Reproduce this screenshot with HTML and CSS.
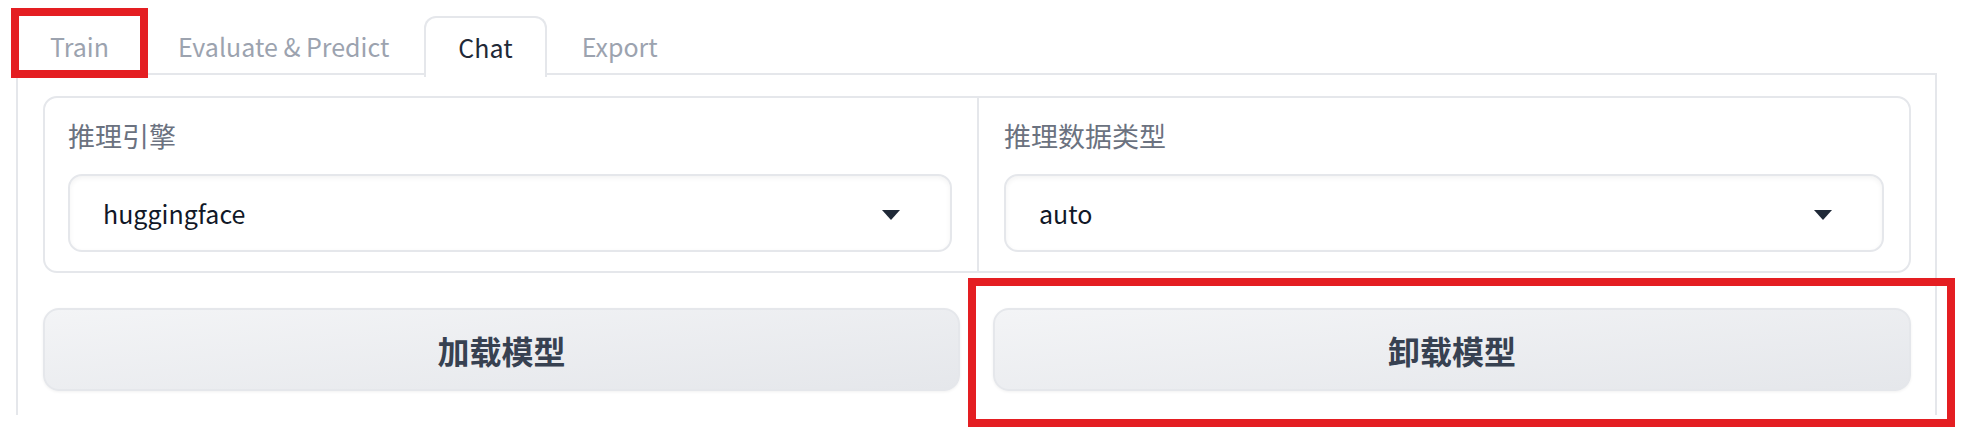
FILE: index.html
```html
<!doctype html>
<html>
<head>
<meta charset="utf-8">
<title>Chat</title>
<link rel="stylesheet" href="styles.css">
</head>

<body>
<div class="page">
  <div class="tabs">
    <div class="tab-nav">
      <button class="tab">Train</button>
      <button class="tab">Evaluate &amp; Predict</button>
      <button class="tab selected">Chat</button>
      <button class="tab">Export</button>
    </div>
    <div class="tab-body">
      <div class="form">
        <div class="field">
          <div class="label">推理引擎</div>
          <div class="dropdown">
            <span>huggingface</span>
            <svg width="18" height="10" viewBox="0 0 18 10"><path d="M0 0H18L9 10Z" fill="#1f2937"/></svg>
          </div>
        </div>
        <div class="field">
          <div class="label">推理数据类型</div>
          <div class="dropdown">
            <span>auto</span>
            <svg width="18" height="10" viewBox="0 0 18 10"><path d="M0 0H18L9 10Z" fill="#1f2937"/></svg>
          </div>
        </div>
      </div>
      <div class="actions">
        <button class="btn">加载模型</button>
        <button class="btn">卸载模型</button>
      </div>
    </div>
  </div>

  <div class="mark mark-tab"></div>
  <div class="mark mark-btn"></div>
</div>
</body>
</html>
```

FILE: styles.css
```css
*{ margin:0; padding:0; box-sizing:border-box}
body{ background:#fff; font-family:"Noto Sans CJK SC", "Noto Sans", sans-serif; color:#1f2937}
.page{ position:relative; height:429px; padding:16px 0 0 16px; overflow:hidden}

.tabs{ width:1921px}
.tab-nav{ display:flex; gap:1px; border-bottom:2px solid #e5e7eb; height:59px}
.tab{ height:59px; padding:0 32px; border:2px solid transparent; border-bottom:none; border-radius:12px 12px 0 0; background:none; font-family:inherit; font-size:25px; line-height:47px; color:#9ca3af; margin-bottom:-2px}
.tab.selected{ border-color:#e5e7eb; background:#fff; color:#1f2937; height:61px}

.tab-body{ border:2px solid #e5e7eb; border-top:none; border-bottom:none; height:340px; padding:21px 24px 24px 25px}

.form{ display:grid; grid-template-columns:1fr 1fr; border:2px solid #e5e7eb; border-radius:14px; background:#fff}
.field{ padding:20px 25px 19px 23px}
.field+.field{ border-left:2px solid #e5e7eb; padding-left:25px}
.label{ font-size:27px; line-height:36px; color:#6b7280; margin-bottom:20px}
.dropdown{ height:78px; display:flex; align-items:center; justify-content:space-between; padding:0 50px 0 33px; border:2px solid #e5e7eb; border-radius:14px; box-shadow:inset 0 2px 5px rgba(0,0,0,0.05); font-size:25px; color:#111827}
.dropdown svg{ display:block; margin-top:3px}

.actions{ display:grid; grid-template-columns:917px 1fr; gap:33px; margin-top:35px}
.btn{ height:83px; border:2px solid #e5e7eb; border-radius:16px; background:linear-gradient(to bottom right, #f3f4f6, #e5e7eb); box-shadow:0 1px 3px rgba(0,0,0,0.06); font-family:inherit; font-size:32px; font-weight:700; color:#374151}

.mark{ position:absolute; border:8px solid #e41e22}
.mark-tab{ left:11px; top:8px; width:137px; height:70px}
.mark-btn{ left:968px; top:278px; width:987px; height:149px}
```
